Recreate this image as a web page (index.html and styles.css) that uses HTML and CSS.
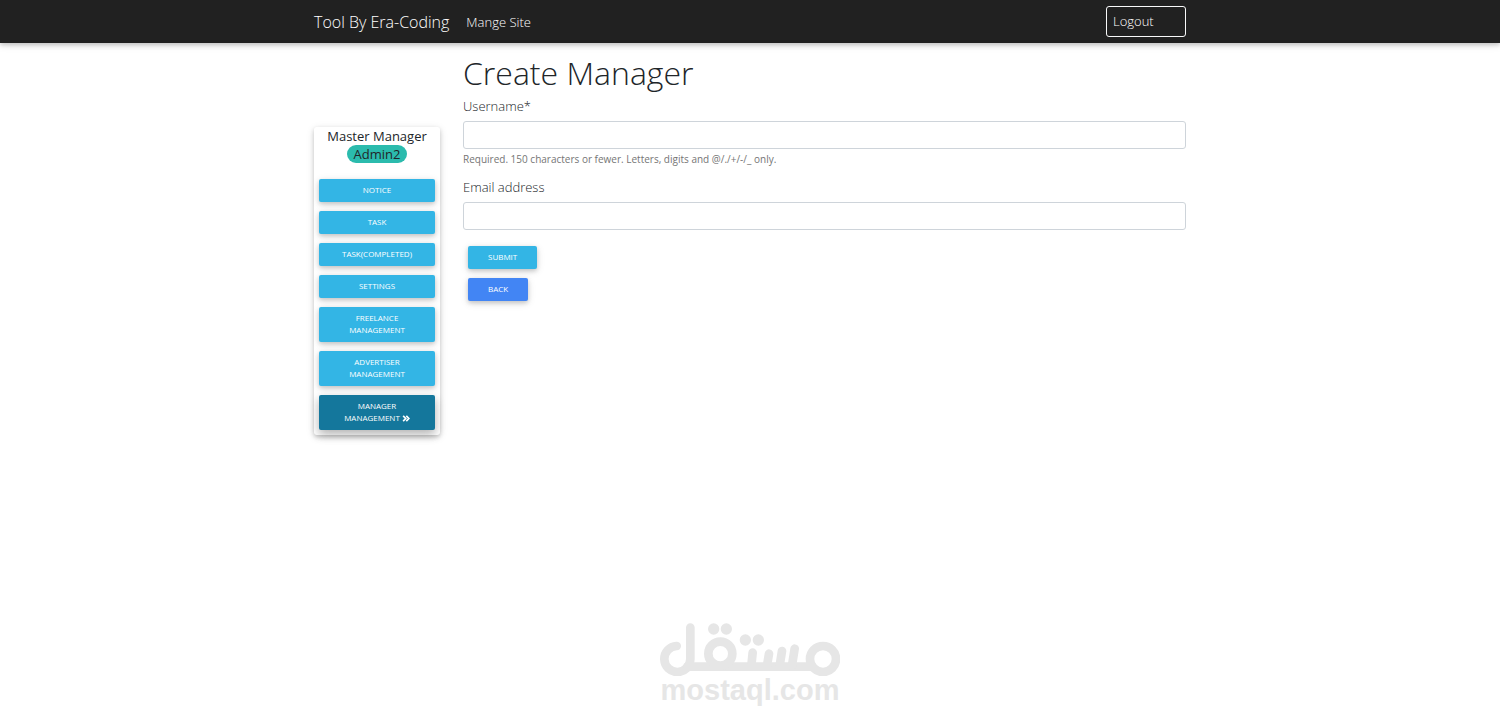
FILE: index.html
```html
<!DOCTYPE html>
<html lang="en">
<head>
<meta charset="utf-8">
<meta name="viewport" content="width=device-width, initial-scale=1">
<title>Create Manager</title>
<link rel="stylesheet" href="styles.css">
</head>
<body>
<header class="topbar">
  <nav class="container topbar-inner">
    <a class="brand" href="#">Tool By Era-Coding</a>
    <a class="nav-link" href="#">Mange Site</a>
    <a class="logout" href="#">Logout</a>
  </nav>
</header>
<main class="container layout">
  <aside class="sidebar">
    <div class="profile">
      <div>Master Manager</div>
      <span class="pill">Admin2</span>
    </div>
    <nav class="menu">
      <a class="btn" href="#">Notice</a>
      <a class="btn" href="#">Task</a>
      <a class="btn" href="#">Task(Completed)</a>
      <a class="btn" href="#">Settings</a>
      <a class="btn" href="#">Freelance Management</a>
      <a class="btn" href="#">Advertiser Management</a>
      <a class="btn btn-active" href="#">Manager Management <svg class="chevrons" viewBox="0 0 14 12" aria-hidden="true"><path d="M2 1.5 6.500 6 2 10.500M7.500 1.500 12 6 7.500 10.500"/></svg></a>
    </nav>
  </aside>
  <section class="content">
    <h1 class="title">Create Manager</h1>
    <form class="form">
      <div class="field">
        <label class="label" for="username">Username*</label>
        <input class="input" id="username" type="text" aria-describedby="username-hint">
        <small class="hint" id="username-hint">Required. 150 characters or fewer. Letters, digits and @/./+/-/_ only.</small>
      </div>
      <div class="field">
        <label class="label" for="email">Email address</label>
        <input class="input" id="email" type="email">
      </div>
      <div class="actions">
        <button class="btn" type="submit">Submit</button>
        <a class="btn btn-back" href="#">Back</a>
      </div>
    </form>
  </section>
</main>
<footer class="watermark">
  <svg class="mark" viewBox="30 38 540 160" aria-hidden="true">
    <g class="mark-lines">
      <path d="M80 107A39 39 0 1 0 121 146V52"/>
      <path d="M112 169H480"/>
      <circle cx="211" cy="130" r="36"/>
      <path d="M308 127 304 166M357 130 351 166M396 122 389 166M434 115 426 166"/>
      <circle cx="519" cy="146" r="39"/>
    </g>
    <g class="mark-dots">
      <circle cx="191" cy="56" r="17"/><circle cx="229" cy="56" r="17"/>
      <circle cx="286" cy="89" r="17"/><circle cx="325" cy="89" r="17"/>
    </g>
  </svg>
  <div class="mark-name">mostaql.com</div>
</footer>
</body>
</html>
```
FILE: styles.css
```css
* { box-sizing: border-box; }

body {
  margin: 0;
  min-height: 100vh;
  display: flex;
  flex-direction: column;
  background: #fff;
  color: #212529;
  font: 300 13px/18px "Open Sans", sans-serif;
}

a { color: inherit; text-decoration: none; }

.container {
  width: 100%;
  max-width: 872px;
  margin: 0 auto;
}

.topbar {
  background: #212121;
  color: #fff;
  box-shadow: 0 2px 4px rgba(0, 0, 0, 0.16), 0 2px 8px rgba(0, 0, 0, 0.12);
}

.topbar-inner {
  display: flex;
  align-items: center;
  padding: 6px 0;
}

.brand { font-size: 16px; }

.nav-link { margin-left: 17px; }

.logout {
  width: 80px;
  margin-left: auto;
  padding: 5px 6px;
  border: 1px solid #f8f9fa;
  border-radius: 3px;
  line-height: 19px;
}

.layout {
  display: grid;
  grid-template-columns: 126px 1fr;
  column-gap: 23px;
  align-items: start;
}

.sidebar {
  margin-top: 84px;
  padding: 0 5px 5px;
  border-radius: 3px;
  box-shadow: 0 2px 4px rgba(0, 0, 0, 0.16), 0 2px 8px rgba(0, 0, 0, 0.12);
}

.profile {
  margin-bottom: 16px;
  text-align: center;
  font-weight: 400;
}

.pill {
  display: inline-block;
  padding: 0 7px;
  border-radius: 9px;
  background: #2bbbad;
}

.menu {
  display: flex;
  flex-direction: column;
  gap: 9px;
}

.btn {
  padding: 5px 20px 6px;
  border: 0;
  border-radius: 2px;
  background: #33b5e5;
  box-shadow: 0 2px 4px rgba(0, 0, 0, 0.16), 0 2px 8px rgba(0, 0, 0, 0.12);
  color: #fff;
  font: 400 8px/12px "Open Sans", sans-serif;
  text-align: center;
  text-transform: uppercase;
}

.btn-active {
  background: #14779c;
  box-shadow: 0 4px 9px rgba(0, 0, 0, 0.18), 0 4px 12px rgba(0, 0, 0, 0.15);
}

.btn-back { background: #4285f4; }

.chevrons {
  width: 8px;
  height: 7px;
  vertical-align: -1px;
  fill: none;
  stroke: #fff;
  stroke-width: 3;
}

.title {
  margin: 10px 0 4px;
  font-size: 32px;
  font-weight: 300;
  line-height: 40px;
}

.field {
  display: flex;
  flex-direction: column;
  margin-bottom: 12px;
}

.label { margin-bottom: 6px; }

.input {
  width: 100%;
  height: 28px;
  padding: 4px 9px;
  border: 1px solid #ced4da;
  border-radius: 3px;
  background: #fff;
  font: inherit;
}

.hint {
  margin-top: 3px;
  color: #757575;
  font-size: 10px;
  font-weight: 400;
  line-height: 14px;
}

.actions {
  display: flex;
  flex-direction: column;
  align-items: flex-start;
  gap: 9px;
  padding: 4px 5px;
}

.watermark {
  width: 180px;
  margin: auto auto 16px;
  color: #e6e6e6;
}

.mark { display: block; width: 100%; }

.mark-lines {
  fill: none;
  stroke: currentColor;
  stroke-width: 26;
  stroke-linecap: round;
}

.mark-dots { fill: currentColor; }

.mark-name {
  font: 700 29px/28px "Liberation Sans", Arial, sans-serif;
  text-align: center;
}
```
